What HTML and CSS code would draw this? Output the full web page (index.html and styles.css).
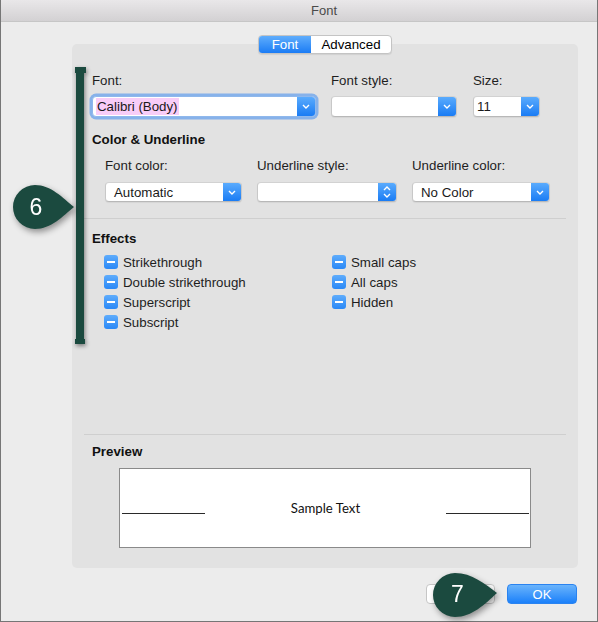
FILE: index.html
```html
<!DOCTYPE html>
<html>
<head>
<meta charset="utf-8">
<title>Font</title>
<link rel="stylesheet" href="styles.css">
</head>
<body>
<div class="window">
  <div class="titlebar"><span class="title">Font</span></div>
  <div class="content">
    <div class="panel">
      <div class="tabs">
        <span class="tab tab-active">Font</span>
        <span class="tab tab-plain">Advanced</span>
      </div>

      <div class="row row-top">
        <div class="field w-font">
          <div class="label">Font:</div>
          <div class="select focus">
            <span class="value pad-s"><span class="hl">Calibri (Body)</span></span>
            <span class="arrow"><svg width="8" height="5" viewBox="0 0 8 5"><polyline points="1,1 4,4 7,1" fill="none" stroke="#fff" stroke-width="1.4"/></svg></span>
          </div>
        </div>
        <div class="field w-style">
          <div class="label">Font style:</div>
          <div class="select">
            <span class="value pad-s"></span>
            <span class="arrow"><svg width="8" height="5" viewBox="0 0 8 5"><polyline points="1,1 4,4 7,1" fill="none" stroke="#fff" stroke-width="1.4"/></svg></span>
          </div>
        </div>
        <div class="field w-size">
          <div class="label">Size:</div>
          <div class="select">
            <span class="value pad-s">11</span>
            <span class="arrow"><svg width="8" height="5" viewBox="0 0 8 5"><polyline points="1,1 4,4 7,1" fill="none" stroke="#fff" stroke-width="1.4"/></svg></span>
          </div>
        </div>
      </div>

      <div class="heading h-color">Color &amp; Underline</div>

      <div class="row row-color">
        <div class="field w-fcolor">
          <div class="label">Font color:</div>
          <div class="select small">
            <span class="value pad-l">Automatic</span>
            <span class="arrow"><svg width="8" height="5" viewBox="0 0 8 5"><polyline points="1,1 4,4 7,1" fill="none" stroke="#fff" stroke-width="1.4"/></svg></span>
          </div>
        </div>
        <div class="field w-ustyle">
          <div class="label">Underline style:</div>
          <div class="select small">
            <span class="value pad-l"></span>
            <span class="arrow"><svg width="8" height="12" viewBox="0 0 8 12"><polyline points="1,4 4,1 7,4" fill="none" stroke="#fff" stroke-width="1.4"/><polyline points="1,8 4,11 7,8" fill="none" stroke="#fff" stroke-width="1.4"/></svg></span>
          </div>
        </div>
        <div class="field w-ucolor">
          <div class="label">Underline color:</div>
          <div class="select small">
            <span class="value pad-l">No Color</span>
            <span class="arrow"><svg width="8" height="5" viewBox="0 0 8 5"><polyline points="1,1 4,4 7,1" fill="none" stroke="#fff" stroke-width="1.4"/></svg></span>
          </div>
        </div>
      </div>

      <div class="sep sep-mid"></div>

      <div class="heading h-effects">Effects</div>

      <div class="effects">
        <div class="col col-a">
          <div class="check"><span class="box"><span class="minus"></span></span>Strikethrough</div>
          <div class="check"><span class="box"><span class="minus"></span></span>Double strikethrough</div>
          <div class="check"><span class="box"><span class="minus"></span></span>Superscript</div>
          <div class="check"><span class="box"><span class="minus"></span></span>Subscript</div>
        </div>
        <div class="col">
          <div class="check"><span class="box"><span class="minus"></span></span>Small caps</div>
          <div class="check"><span class="box"><span class="minus"></span></span>All caps</div>
          <div class="check"><span class="box"><span class="minus"></span></span>Hidden</div>
        </div>
      </div>

      <div class="sep sep-preview"></div>
      <div class="heading h-preview">Preview</div>
      <div class="preview">
        <span class="pline"></span>
        <span class="sample">Sample Text</span>
        <span class="pline"></span>
      </div>
    </div>

    <div class="footer">
      <button class="btn btn-cancel" aria-label="Cancel"></button>
      <button class="btn btn-ok">OK</button>
    </div>
  </div>

  <svg class="marker" width="18" height="288" viewBox="0 0 18 288">
    <g fill="#1b4a3f">
      <rect x="3" y="4" width="11" height="6"/>
      <rect x="4" y="4" width="8" height="277"/>
      <rect x="3" y="276" width="10" height="5"/>
    </g>
  </svg>

  <svg class="bubble bubble-6" width="76" height="56" viewBox="0 0 76 56">
    <path d="M66 27 C55 18 43 5 27 5 A22 22 0 0 0 27 49 C43 49 55 36 66 27 Z" fill="#1b4a3f"/>
    <text x="28" y="35" class="bubble-num" text-anchor="middle">6</text>
  </svg>

  <svg class="bubble bubble-7" width="76" height="56" viewBox="0 0 76 56">
    <path d="M69 25 C57 16 44 5 27 5 A22 22 0 0 0 27 49 C44 49 57 36 69 25 Z" fill="#1b4a3f"/>
    <text x="29.5" y="34" class="bubble-num" text-anchor="middle">7</text>
  </svg>
</div>
</body>
</html>
```
FILE: styles.css
```css
* { box-sizing: border-box; }

html, body {
  margin: 0;
  padding: 0;
  background: #ececec;
}

body {
  width: 598px;
  height: 622px;
  overflow: hidden;
  font-family: "Liberation Sans", Arial, sans-serif;
  font-size: 13.3px;
  color: #1e1e1e;
}

.window {
  position: relative;
  width: 598px;
  height: 622px;
  border: 1px solid #767676;
  border-top: none;
  background: #ececec;
}

.titlebar {
  height: 22px;
  border-bottom: 1px solid #c6c6c6;
  background: linear-gradient(#e9e7e9, #d3d1d3);
  padding-left: 50px;
  text-align: center;
  line-height: 21px;
  font-size: 13px;
  color: #4a4a4a;
}

.content {
  padding: 0 19px 0 71px;
}

.panel {
  margin-top: 22px;
  height: 524px;
  background: #e2e2e2;
  border-radius: 5px;
  padding: 0 12px 20px 12px;
  display: flex;
  flex-direction: column;
}

.tabs {
  align-self: center;
  margin-top: -9px;
  display: flex;
  height: 19px;
  border: 1px solid #c4c4c4;
  border-radius: 4px;
  background: #fff;
  overflow: hidden;
  box-shadow: 0 1px 1px rgba(0,0,0,0.08);
}

.tab {
  display: flex;
  align-items: center;
  justify-content: center;
  font-size: 13.3px;
  line-height: 17px;
}

.tab-active {
  width: 52px;
  color: #fff;
  background: linear-gradient(#5fadfc, #1b7cf5);
}

.tab-plain {
  width: 80px;
  color: #000;
}

.row {
  display: flex;
}

.row-top {
  margin-top: 19px;
  padding-left: 8px;
}

.row-color {
  margin-top: 10px;
  padding-left: 21px;
}

.label {
  line-height: 16px;
  height: 16px;
  white-space: nowrap;
  color: #1e1e1e;
}

.row-top .label { margin-bottom: 7px; }
.row-color .label { margin-bottom: 8px; }

.w-font { width: 224px; }
.w-style { width: 126px; margin-left: 15px; }
.w-size { width: 67px; margin-left: 16px; }

.w-fcolor { width: 137px; }
.w-ustyle { width: 140px; margin-left: 15px; }
.w-ucolor { width: 138px; margin-left: 15px; }

.select {
  display: flex;
  height: 21px;
  background: #fff;
  border: 1px solid #c8c8c8;
  border-top-color: #d2d2d2;
  border-bottom-color: #b8b8b8;
  border-radius: 4px;
  overflow: hidden;
  box-shadow: 0 1px 1px rgba(0,0,0,0.06);
}

.select.small { height: 20px; }

.select.focus {
  box-shadow: 0 0 0 2.5px rgba(104,162,236,0.75);
  border-color: #8fb8ec;
}

.value {
  flex: 1;
  display: flex;
  align-items: center;
  white-space: nowrap;
  color: #1a1a1a;
}

.pad-s { padding-left: 3px; }
.pad-l { padding-left: 8px; }

.hl {
  background: #f8cdf8;
  padding: 1px 1px 1px 1px;
  line-height: 15px;
}

.arrow {
  width: 18px;
  display: flex;
  align-items: center;
  justify-content: center;
  background: linear-gradient(#5aabfd, #1a7cf4);
}

.heading {
  font-weight: bold;
  line-height: 16px;
  height: 16px;
  padding-left: 8px;
  color: #111;
}

.h-color { margin-top: 15px; }
.h-effects { margin-top: 12px; }
.h-preview { margin-top: 9px; }

.sep {
  height: 1px;
  background: #cfcfcf;
}

.sep-mid { margin-top: 16px; }
.sep-preview { margin-top: auto; }

.effects {
  margin-top: 5px;
  padding-left: 20px;
  display: flex;
}

.col-a { width: 228px; }

.check {
  display: flex;
  align-items: center;
  height: 20px;
  white-space: nowrap;
  color: #1e1e1e;
}

.box {
  width: 14px;
  height: 14px;
  border-radius: 3px;
  background: linear-gradient(#5eacfc, #2a88f6);
  display: flex;
  align-items: center;
  justify-content: center;
  margin-right: 5px;
  flex: none;
}

.minus {
  width: 8px;
  height: 2px;
  background: #fff;
}

.preview {
  margin-top: 8px;
  margin-left: 35px;
  width: 412px;
  height: 80px;
  background: #fff;
  border: 1px solid #8a8a8a;
  display: flex;
  align-items: center;
  justify-content: space-between;
  padding: 0 1px 0 2px;
}

.pline {
  width: 83px;
  height: 1px;
  margin-top: 10px;
  background: #2a2a2a;
}

.sample {
  font-family: Lato, "Open Sans", sans-serif;
  font-size: 13.2px;
  color: #111;
}

.footer {
  margin-top: 16px;
  display: flex;
  justify-content: flex-end;
  padding-right: 1px;
}

.btn {
  height: 20px;
  border-radius: 4px;
  font-family: "Liberation Sans", Arial, sans-serif;
  font-size: 13px;
  padding: 0;
  margin: 0;
}

.btn-cancel {
  width: 69px;
  margin-right: 12px;
  background: #fff;
  border: 1px solid #c6c6c6;
  color: #222;
}

.btn-ok {
  width: 70px;
  background: linear-gradient(#6ab4fc, #1b80fa);
  border: 1px solid #2a83f0;
  color: #fff;
}

.marker {
  position: absolute;
  left: 71px;
  top: 63px;
  filter: drop-shadow(1px 2px 2px rgba(0,0,0,0.45));
}

.bubble {
  position: absolute;
  filter: drop-shadow(2px 3px 3px rgba(0,0,0,0.4));
}

.bubble-6 { left: 7px; top: 180px; }
.bubble-7 { left: 427px; top: 568px; }

.bubble-num {
  fill: #fff;
  font-family: "Liberation Sans", Arial, sans-serif;
  font-size: 23px;
}
```
